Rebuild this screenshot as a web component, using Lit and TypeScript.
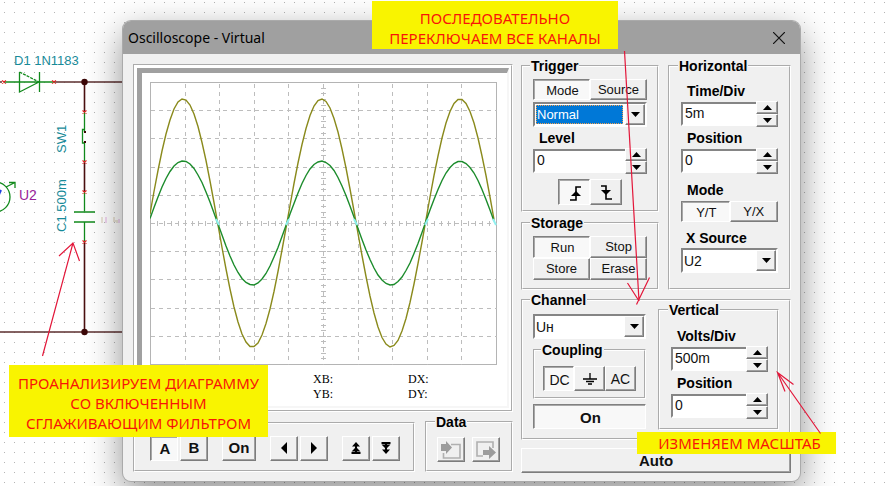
import { LitElement, html, css, svg, nothing } from "lit";
import { customElement, property } from "lit/decorators.js";

const controls = css`
  * {
    box-sizing: border-box;
  }
  button,
  input,
  select {
    margin: 0;
    padding: 0;
    border-radius: 0;
    font: 13px/16px "Liberation Sans", Arial, sans-serif;
    color: #111;
    outline: none;
  }
  svg {
    display: block;
  }
  button {
    display: flex;
    align-items: center;
    justify-content: center;
    background: #f0f0f0;
    border: 1px solid;
    border-color: #fff #7c7c7c #7c7c7c #fff;
    box-shadow: inset -1px -1px #a0a0a0;
  }
  button.pressed {
    background: #f8f8f8;
    border-color: #808080 #fff #fff #808080;
    box-shadow: inset 1px 1px #a8a8a8;
    padding: 2px 0 0 2px;
  }
`;

const arrowUp = svg`<svg width="9" height="5" viewBox="0 0 9 5"><path d="M0 5 4.5 0 9 5z" fill="#000"/></svg>`;
const arrowDown = svg`<svg width="9" height="5" viewBox="0 0 9 5"><path d="M0 0h9L4.5 5z" fill="#000"/></svg>`;

@customElement("spin-box")
export class SpinBox extends LitElement {
  @property() label = "";
  @property() value = "";
  static styles = [
    controls,
    css`
      :host {
        display: block;
      }
      .label {
        display: block;
        padding: 0 6px;
        margin-bottom: 2px;
        font: bold 14px/16px "Liberation Sans", Arial, sans-serif;
        color: #000;
      }
      .row {
        display: flex;
        align-items: center;
        height: 26px;
      }
      .box {
        flex: 1;
        min-width: 0;
        height: 24px;
        padding: 0 2px 2px;
        font-size: 14px;
        background: #fff;
        border: 2px solid;
        border-color: #858585 #fff #fff #858585;
        border-right-width: 0;
      }
      .steps {
        display: grid;
        grid-template-rows: 1fr 1fr;
        width: 22px;
        height: 26px;
      }
    `,
  ];
  render() {
    return html`
      <label class="label" for="v">${this.label}</label>
      <div class="row">
        <input class="box" id="v" type="text" .value=${this.value} />
        <div class="steps">
          <button aria-label="Increase">${arrowUp}</button>
          <button aria-label="Decrease">${arrowDown}</button>
        </div>
      </div>
    `;
  }
}

@customElement("combo-box")
export class ComboBox extends LitElement {
  @property() label = "";
  @property() value = "";
  @property({ type: Boolean }) caption = false;
  @property({ type: Boolean }) active = false;
  static styles = [
    controls,
    css`
      :host {
        display: block;
      }
      .label {
        display: block;
        padding: 0 5px;
        margin-bottom: 2px;
        font: bold 14px/16px "Liberation Sans", Arial, sans-serif;
        color: #000;
      }
      .frame {
        display: flex;
        position: relative;
        height: 25px;
        background: #fff;
        border: 2px solid;
        border-color: #858585 #fff #fff #858585;
      }
      .pick {
        flex: 1;
        appearance: none;
        margin: 1px 22px 1px 0;
        border: 1px solid transparent;
        background: #fff;
        font-size: 14px;
      }
      .active .pick {
        margin-left: 1px;
        background: #0078d7;
        border: 1px dotted #f0a050;
        color: #fff;
        font-size: 13px;
      }
      .drop {
        position: absolute;
        right: 0;
        top: 0;
        bottom: 0;
        width: 20px;
        display: flex;
        align-items: center;
        justify-content: center;
        pointer-events: none;
        background: #f0f0f0;
        border: 1px solid;
        border-color: #fff #7c7c7c #7c7c7c #fff;
        box-shadow: inset -1px -1px #a0a0a0;
      }
    `,
  ];
  render() {
    return html`
      ${this.caption ? html`<label class="label" for="s">${this.label}</label>` : nothing}
      <div class="frame ${this.active ? "active" : ""}">
        <select class="pick" id="s" aria-label=${this.label}>
          <option>${this.value}</option>
        </select>
        <span class="drop">${arrowDown}</span>
      </div>
    `;
  }
}

const W = 347;
const H = 283;
const PERIOD = 138.5;
const MID = 141;

const wave = (amp: number) => {
  const pts: string[] = [];
  for (let x = 0; x <= W - 1; x += 4) {
    const y = MID - amp * Math.cos((2 * Math.PI * (x - 33)) / PERIOD);
    pts.push(`${x},${Math.round(y * 2) / 2}`);
  }
  return pts.join(" ");
};

const at = (n: number, size: number) => Math.round((n * (size - 1)) / 10) + 0.5;
const inner = [1, 2, 3, 4, 5, 6, 7, 8, 9];

const plot = () => html`
  <svg class="plot" viewBox="0 0 ${W} ${H}" role="img" aria-label="Waveforms">
    <g stroke="#bdbdbd" fill="none" stroke-width="1">
      <rect x="0.5" y="0.5" width=${W - 1} height=${H - 1} stroke="#b4b4b4" />
      ${inner.map(
        (n) => svg`
          <path d="M${at(n, W)} 2V${H}" stroke-dasharray="4 4"/>
          <path d="M1 ${at(n, H)}H${W}" stroke-dasharray="4 4"/>`,
      )}
      ${Array.from({ length: 49 }, (_, i) => {
        const x = Math.round(((i + 1) * (W - 1)) / 50) + 0.5;
        const y = Math.round(((i + 1) * (H - 1)) / 50) + 0.5;
        return svg`<path d="M${x} 139v5M${171} ${y}h5"/>`;
      })}
    </g>
    <g fill="none" stroke-width="1.4">
      <polyline points=${wave(124)} stroke="#8a8a1c" />
      <polyline points=${wave(62)} stroke="#1c8c2c" />
      ${[68, 137, 206, 276, 345].map((x, i) =>
        i % 2
          ? svg`<path d="M${x - 1} 143l3-6" stroke="#8ff0f0" stroke-width="2"/>`
          : svg`<path d="M${x - 2} 137l3 6" stroke="#8ff0f0" stroke-width="2"/>`,
      )}
    </g>
  </svg>
`;

const pin = (x: number, y: number) =>
  svg`<path d="M${x - 2} ${y - 1.5}l4 3M${x - 2} ${y + 1.5}l4-3" stroke="#e02020" stroke-width="1.2"/>`;

const circuit = () => html`
  <svg class="circuit" width="100%" height="100%" aria-hidden="true">
    <defs>
      <pattern id="dots" width="10" height="10" patternUnits="userSpaceOnUse">
        <rect x="4" y="2" width="1" height="1" fill="#b4b4b4" />
      </pattern>
    </defs>
    <rect width="100%" height="100%" fill="url(#dots)" />
    <g stroke="#5c2f2f" stroke-width="1.6" fill="none">
      <path d="M55 82H130M0 332H130" />
      <path d="M84.5 82V112M84.5 162V192M84.5 242V332" stroke="#4a1010" />
    </g>
    <g stroke="#128a1c" stroke-width="1.3" fill="none">
      <path d="M4 82H55M39 82 19.5 92V72M39.5 72V92" />
      <path d="M19.5 72 39 82" stroke-dasharray="3 1" />
      <path d="M84.5 112V132M84.5 142V162M85 129.5H82.5V143H85M84.5 192V211.5M84.5 222V242" />
      <path d="M74 212H95M74 222H95" stroke-width="1.6" />
      <circle cx="-5" cy="197" r="15" />
      <path d="M6 187 15 182.5M9 182.5H15V188" />
    </g>
    <path d="M-3 199 1 190" stroke="#2040e0" stroke-width="2" />
    <path d="M-6 82H2" stroke="#5c2f2f" stroke-width="1.6" />
    ${[4, 54].map((x) => pin(x, 82))}${[112, 162, 192, 242].map((y) => pin(84.5, y))}
    <g fill="#3c0808">
      <circle cx="84.5" cy="82" r="3.2" /><circle cx="84.5" cy="332" r="3.2" />
      <rect x="84" y="131" width="2" height="2" /><rect x="84" y="141" width="2" height="2" />
    </g>
    <g stroke-width="2" opacity="0.2">
      <path d="M102 217v6M114 217v4h3v2" stroke="#a08040" fill="none" />
      <path d="M106 217v6M119 219v4" stroke="#c040c0" />
    </g>
    <g class="parts">
      <text x="14" y="65">D1 1N1183</text>
      <text transform="translate(66 153) rotate(-90)">SW1</text>
      <text transform="translate(66 232) rotate(-90)">C1 500m</text>
      <text x="19" y="200" class="meter">U2</text>
    </g>
  </svg>
`;

@customElement("app-root")
export class AppRoot extends LitElement {
  static styles = [
    controls,
    css`
      :host {
        display: block;
        position: relative;
        min-height: 100vh;
        overflow: hidden;
        background: #fff;
        font: 14px/16px "Liberation Sans", Arial, sans-serif;
        color: #000;
      }
      .circuit {
        position: absolute;
        inset: 0;
      }
      .parts {
        font-size: 13px;
        fill: #178a98;
      }
      .meter {
        fill: #9a1c9a;
        font-size: 14px;
      }
      .window {
        position: absolute;
        left: 123px;
        right: 90px;
        top: 21px;
        background: #f0f0f0;
        border-radius: 8px;
        box-shadow: 0 0 0 1px #aaa, 0 12px 36px rgba(0, 0, 0, 0.46);
      }
      .title {
        display: flex;
        align-items: center;
        justify-content: space-between;
        height: 33px;
        padding: 0 5px;
        border-radius: 8px 8px 0 0;
        background: #a0a0a0;
        font: 14px/20px "Noto Sans", "Open Sans", sans-serif;
      }
      .title button {
        width: 32px;
        height: 32px;
        background: none;
        border: 0;
        box-shadow: none;
      }
      .body {
        display: grid;
        grid-template-columns: 1fr 270px;
        gap: 8px;
        padding: 4px 9px 8px 10px;
      }
      .left {
        display: flex;
        flex-direction: column;
        gap: 2px;
        padding-top: 6px;
        padding-bottom: 1px;
      }
      .screen {
        padding: 2px;
        background: #fff;
        border: 2px groove #fff;
      }
      .glass {
        padding: 9px 10px 4px 8px;
        border: 5px solid;
        border-color: #a0a0a0 #f6f6f6 #f6f6f6 #a0a0a0;
        border-right-width: 2px;
        border-bottom-width: 2px;
      }
      .plot {
        width: 100%;
      }
      .readout {
        display: grid;
        grid-template-columns: 163px 95px 1fr;
        padding-top: 7px;
        font: 12px/15px "Liberation Serif", "Times New Roman", serif;
      }
      .c2 {
        grid-column: 2;
      }
      .bottom {
        display: flex;
        align-items: flex-end;
        gap: 10px;
      }
      fieldset {
        min-width: 0;
        margin: 0;
        padding: 0;
        border: 2px groove #fff;
      }
      legend {
        margin-left: 8px;
        padding: 0 1px;
        font: bold 14px/16px "Liberation Sans", Arial, sans-serif;
      }
      .padded > legend {
        margin-left: -3px;
      }
      .markers {
        flex: 1;
        display: flex;
        align-items: center;
        gap: 14px;
        height: 50px;
        padding: 2px 12px 0 15px;
        border: 2px groove #fff;
      }
      .pair {
        display: flex;
        gap: 1px;
      }
      .markers .pair {
        gap: 2px;
      }
      .markers button,
      .data button {
        width: 28px;
        height: 25px;
      }
      .data {
        width: 88px;
        height: 58px;
      }
      .data .pair {
        gap: 7px;
        padding: 7px 10px;
      }
      .markers .wide {
        width: 34px;
      }
      .bold,
      .markers button {
        font-size: 15px;
        font-weight: bold;
      }
      .right {
        display: flex;
        flex-direction: column;
      }
      .upper {
        display: grid;
        grid-template-columns: 138px 123px;
        gap: 9px;
      }
      .stack {
        display: flex;
        flex-direction: column;
        gap: 3px;
      }
      .two {
        display: grid;
        grid-template-columns: 1fr 1fr;
        grid-auto-rows: 21px;
      }
      .trigger {
        padding: 5px 10px;
      }
      .trigger .two {
        margin-bottom: 2px;
      }
      .trigger spin-box {
        margin-top: 3px;
      }
      .edges {
        display: flex;
        justify-content: center;
        margin-top: 5px;
      }
      .edges button {
        width: 32px;
        height: 26px;
      }
      .storage {
        padding: 5px 10px 8px;
      }
      .storage .two {
        grid-auto-rows: 22px;
      }
      .horizontal {
        display: flex;
        flex-direction: column;
        padding: 9px 11px 0;
      }
      .horizontal spin-box,
      .vertical spin-box {
        margin-bottom: 3px;
      }
      .caption {
        margin: 5px 0 3px;
        padding: 0 6px;
        font: bold 14px/16px "Liberation Sans", Arial, sans-serif;
      }
      .horizontal combo-box {
        margin-top: 8px;
      }
      .channel {
        margin-top: 2px;
        padding: 0 9px 8px 10px;
      }
      .split {
        display: grid;
        grid-template-columns: 113px 121px;
        gap: 12px;
      }
      .source {
        padding-top: 6px;
      }
      .coupling {
        margin-top: 3px;
        height: 57px;
      }
      .coupling > legend {
        margin-left: 6px;
      }
      .coupling .row {
        display: grid;
        grid-template-columns: 1fr 1fr 1fr;
        grid-auto-rows: 25px;
        padding: 8px 8px 0;
      }
      .coupling button {
        font-size: 14px;
      }
      .on {
        width: 100%;
        height: 25px;
        margin-top: 5px;
      }
      .vertical {
        margin-top: -6px;
        padding: 10px 9px 6px 11px;
      }
      .auto {
        height: 25px;
        margin-top: 8px;
      }
      .note {
        position: absolute;
        background: #f9f400;
        color: #f81408;
        text-align: center;
        white-space: nowrap;
        font: 15px/20px "Noto Sans", "Open Sans", sans-serif;
      }
      .note svg {
        position: absolute;
        overflow: visible;
        pointer-events: none;
      }
      .n1 {
        left: 9px;
        top: 365px;
        width: 259px;
        padding: 8px 0 4px;
      }
      .n1 svg {
        left: 50px;
        bottom: 100%;
      }
      .n2 {
        right: 272px;
        top: 1px;
        width: 246px;
        padding: 7px 0 1px;
      }
      .n2 svg {
        left: 252px;
        top: 50px;
      }
      .n3 {
        right: 54px;
        top: 432px;
        width: 199px;
        padding: 1px 0 1px 6px;
      }
      .n3 svg {
        left: 140px;
        bottom: 20px;
      }
    `,
  ];

  render() {
    return html`
      ${circuit()}
      <section class="window" aria-label="Oscilloscope - Virtual">
        <header class="title">
          <span>Oscilloscope - Virtual</span>
          <button aria-label="Close">
            <svg width="12" height="12" viewBox="0 0 12 12"><path d="M0 0 12 12M12 0 0 12" stroke="#111" stroke-width="1.2" /></svg>
          </button>
        </header>
        <div class="body">
          <div class="left">
            <div class="screen">
              <div class="glass">
                ${plot()}
                <div class="readout">
                  <span class="c2">XB:</span><span>DX:</span>
                  <span class="c2">YB:</span><span>DY:</span>
                </div>
              </div>
            </div>
            <div class="bottom">
              <div class="markers">
                <div class="pair"><button class="pressed">A</button><button>B</button></div>
                <button class="wide">On</button>
                <div class="pair">
                  <button aria-label="Left"><svg width="6" height="12" viewBox="0 0 6 12"><path d="M6 0V12L0 6z" /></svg></button>
                  <button aria-label="Right"><svg width="6" height="12" viewBox="0 0 6 12"><path d="M0 0V12L6 6z" /></svg></button>
                </div>
                <div class="pair">
                  <button aria-label="Top"><svg width="10" height="12" viewBox="0 0 10 12"><path d="M5 0 9 4.5H6V6L9.5 9.5H6V10H9.5V12H.5V10H4V9.5H.5L4 6V4.5H1z" /></svg></button>
                  <button aria-label="Bottom"><svg width="10" height="12" viewBox="0 0 10 12"><path d="M5 12 9 7.5H6V6L9.5 2.5H6V2H9.5V0H.5V2H4V2.5H.5L4 6V7.5H1z" /></svg></button>
                </div>
              </div>
              <fieldset class="data">
                <legend>Data</legend>
                <div class="pair">
                  <button aria-label="Import data">
                    <svg width="20" height="18" viewBox="0 0 20 18"><path d="M10 3.5H19V17H2.5V12" fill="none" stroke="#b0b0b0" stroke-width="1.6" /><path d="M0 3H5V0L11 6.5 5 13V10H0z" fill="#9c9c9c" /></svg>
                  </button>
                  <button aria-label="Export data">
                    <svg width="20" height="18" viewBox="0 0 20 18"><path d="M17 7V1H1V15H7" fill="none" stroke="#b0b0b0" stroke-width="1.6" /><path d="M7 9H13V5L20 11.5 13 18V14H7z" fill="#9c9c9c" /></svg>
                  </button>
                </div>
              </fieldset>
            </div>
          </div>
          <div class="right">
            <div class="upper">
              <div class="stack">
                <fieldset class="trigger padded">
                  <legend>Trigger</legend>
                  <div class="two"><button class="pressed">Mode</button><button>Source</button></div>
                  <combo-box label="Trigger mode" value="Normal" active></combo-box>
                  <spin-box label="Level" value="0"></spin-box>
                  <div class="edges">
                    <button class="pressed" aria-label="Rising edge">
                      <svg width="11" height="15" viewBox="0 0 11 15"><path d="M11 1H6V14H0" fill="none" stroke="#000" stroke-width="1.6" /><path d="M6 5 11 10H1z" /></svg>
                    </button>
                    <button aria-label="Falling edge">
                      <svg width="11" height="15" viewBox="0 0 11 15"><path d="M0 1H5V14H11" fill="none" stroke="#000" stroke-width="1.6" /><path d="M5 10 0 5H10z" /></svg>
                    </button>
                  </div>
                </fieldset>
                <fieldset class="storage padded">
                  <legend>Storage</legend>
                  <div class="two">
                    <button class="pressed">Run</button><button>Stop</button>
                    <button>Store</button><button>Erase</button>
                  </div>
                </fieldset>
              </div>
              <fieldset class="horizontal padded">
                <legend>Horizontal</legend>
                <spin-box label="Time/Div" value="5m"></spin-box>
                <spin-box label="Position" value="0"></spin-box>
                <div class="caption">Mode</div>
                <div class="two"><button class="pressed">Y/T</button><button>Y/X</button></div>
                <combo-box caption label="X Source" value="U2"></combo-box>
              </fieldset>
            </div>
            <fieldset class="channel padded">
              <legend>Channel</legend>
              <div class="split">
                <div class="source">
                  <combo-box label="Channel" value="Uн"></combo-box>
                  <fieldset class="coupling">
                    <legend>Coupling</legend>
                    <div class="row">
                      <button class="pressed">DC</button>
                      <button aria-label="Ground">
                        <svg width="14" height="12" viewBox="0 0 14 12"><path d="M7 0V6M0 6H14M3 8.5H11M5 11H9" fill="none" stroke="#000" stroke-width="1.3" /></svg>
                      </button>
                      <button>AC</button>
                    </div>
                  </fieldset>
                  <button class="on bold pressed">On</button>
                </div>
                <fieldset class="vertical padded">
                  <legend>Vertical</legend>
                  <spin-box label="Volts/Div" value="500m"></spin-box>
                  <spin-box label="Position" value="0"></spin-box>
                </fieldset>
              </div>
            </fieldset>
            <button class="auto bold">Auto</button>
          </div>
        </div>
      </section>

      <div class="note n1">
        ПРОАНАЛИЗИРУЕМ ДИАГРАММУ<br />СО ВКЛЮЧЕННЫМ<br />СГЛАЖИВАЮЩИМ ФИЛЬТРОМ
        <svg width="21" height="122" viewBox="59 243 21 122">
          <path d="M42.5 356 73 243M59 256 73 243 79.5 261" fill="none" stroke="#e3173a" stroke-width="1.2" />
        </svg>
      </div>
      <div class="note n2">
        ПОСЛЕДОВАТЕЛЬНО<br />ПЕРЕКЛЮЧАЕМ ВСЕ КАНАЛЫ
        <svg width="26" height="254" viewBox="624 51 26 254">
          <path d="M624.5 51 639 301M627.5 283 639 301M649.5 277.5 636.5 304.5" fill="none" stroke="#e3173a" stroke-width="1.2" />
        </svg>
      </div>
      <div class="note n3">
        ИЗМЕНЯЕМ МАСШТАБ
        <svg width="44" height="62" viewBox="777 372 44 62">
          <path d="M820.5 433.5 777.5 372.5M793.5 384.5 777.5 372.5 785 391.5" fill="none" stroke="#e3173a" stroke-width="1.2" />
        </svg>
      </div>
    `;
  }
}
